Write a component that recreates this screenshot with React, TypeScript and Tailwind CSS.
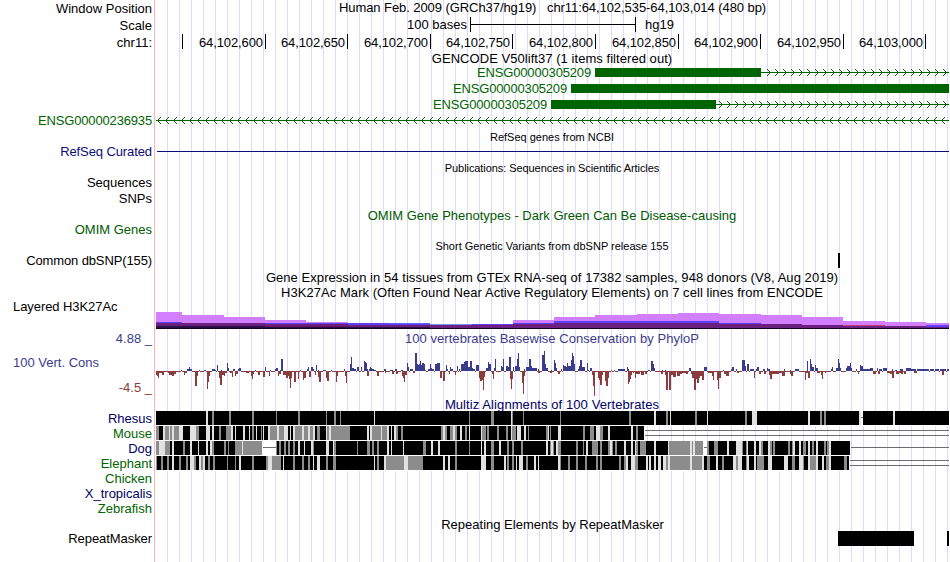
import React from 'react';
import clsx from 'clsx';

// Track drawings share the image's x axis, which starts at the end of the label column
const LEFT = 155;
const WIDTH = 794;
const RIGHT = LEFT + WIDTH;

interface RowProps {
  height: string;
  label?: string;
  labelClass?: string;
  children?: React.ReactNode;
}

function Row({ height, label, labelClass, children }: RowProps) {
  return (
    <div className={clsx('flex', height)}>
      <div className={clsx('w-[155px] shrink-0 pr-[3px] flex items-center justify-end', labelClass)}>
        {label}
      </div>
      <div className="w-[794px] shrink-0">{children}</div>
    </div>
  );
}

interface TitleProps {
  children: React.ReactNode;
  className?: string;
}

function Title({ children, className }: TitleProps) {
  return <div className={clsx('h-full flex items-center justify-center', className)}>{children}</div>;
}

interface CanvasProps {
  top: number;
  height: number;
  children: React.ReactNode;
}

function Canvas({ top, height, children }: CanvasProps) {
  return (
    <svg
      className="block"
      width={WIDTH}
      height={height}
      viewBox={`${LEFT} ${top} ${WIDTH} ${height}`}
      shapeRendering="crispEdges"
    >
      {children}
    </svg>
  );
}

function parse(data: string): number[][] {
  return data
    .trim()
    .split(/[,\n]+/)
    .map(item => item.trim().split(' ').map(Number));
}

/* ---------- Genes ---------- */

const ticks = [
  { label: '64,102,600', width: 'w-[83px]' },
  { label: '64,102,650', width: 'w-[82px]' },
  { label: '64,102,700', width: 'w-[83px]' },
  { label: '64,102,750', width: 'w-[82px]' },
  { label: '64,102,800', width: 'w-[83px]' },
  { label: '64,102,850', width: 'w-[83px]' },
  { label: '64,102,900', width: 'w-[82px]' },
  { label: '64,102,950', width: 'w-[83px]' },
  { label: '64,103,000', width: 'w-[82px]' },
];

interface IntronProps {
  from: number;
  first: number;
  direction: 1 | -1;
}

function Intron({ from, first, direction }: IntronProps) {
  let d = `M${from} 7h${RIGHT - from}v1H${from}z`;
  for (let x = first; x < RIGHT; x += 8) {
    for (let i = 1; i <= 3; i++) {
      const px = x - direction * i;
      d += `M${px} ${7 - i}h1v1h-1zM${px} ${7 + i}h1v1h-1z`;
    }
  }
  return <path d={d} fill="#006400" />;
}

interface GeneProps {
  spacer: string;
  exon: string;
  intron?: IntronProps;
}

function Gene({ spacer, exon, intron }: GeneProps) {
  return (
    <Row height="h-4">
      <div className="h-full flex items-center text-[#006400]">
        <div className={clsx('shrink-0 pr-1 pb-[2px] text-right tracking-[-0.16px]', spacer)}>
          ENSG00000305209
        </div>
        <div className={clsx('h-[9px] shrink-0 bg-[#006400] -mt-px', exon)} />
        {intron && (
          <svg
            className="block flex-1 h-4"
            viewBox={`${intron.from} 0 ${RIGHT - intron.from} 16`}
            shapeRendering="crispEdges"
          >
            <Intron {...intron} />
          </svg>
        )}
      </div>
    </Row>
  );
}

/* ---------- H3K27Ac ---------- */

// x, violet top, blue top, purple top, dark top
const histone = parse(`
156 312 322 323 326, 182 315 323 323 326, 224 317 323 323 326, 265 320 323 324 327,
306 322 323 324 327, 348 323 323 325 327, 389 323 323 325 327, 430 324 324 325 328,
472 324 324 325 328, 513 320 323 324 328, 554 317 321 323 328, 595 315 321 323 328,
637 314 321 323 328, 678 313 321 323 328, 719 314 323 324 328, 761 315 324 324 328,
802 317 325 325 328, 843 321 325 325 328, 885 322 326 326 328, 926 323 325 327 328
`);

function HistoneTrack() {
  return (
    <Canvas top={300} height={30}>
      {histone.map(([x, violet, blue, purple, dark], i) => {
        const w = (histone[i + 1]?.[0] ?? RIGHT) - x;
        return (
          <g key={x}>
            <rect x={x} y={violet} width={w} height={329 - violet} fill="#d17fff" />
            <rect x={x} y={blue} width={w} height={329 - blue} fill="#5f3fff" />
            <rect x={x} y={purple} width={w} height={329 - purple} fill="#6b1f7f" />
            <rect x={x} y={dark} width={w} height={329 - dark} fill="#2a0f4a" />
          </g>
        );
      })}
      <rect x={389} y={323} width={41} height={1} fill="#5f5fff" />
      <rect x={430} y={324} width={42} height={1} fill="#7f8fff" />
      <rect x={843} y={325} width={42} height={1} fill="#bf3f7f" />
      <rect x={265} y={326} width={83} height={1} fill="#6b0f5f" />
      <rect x={156} y={328} width={793} height={1} fill="#140020" />
    </Canvas>
  );
}

/* ---------- PhyloP: x, width, height ---------- */

const conserved = parse(`
181 1 1, 187 2 2, 189 1 4, 190 2 2, 199 1 1, 204 2 1, 212 3 2, 215 1 1, 217 1 6, 221 1 1,
227 1 8, 228 1 3, 233 2 2, 238 2 2, 239 2 3, 255 1 1, 265 1 4, 270 1 1, 275 1 2, 276 2 3,
280 1 1, 281 2 12, 300 1 1, 307 1 2, 308 1 4, 311 2 4, 313 1 2, 316 1 6, 318 1 1, 323 3 1,
331 1 1, 344 1 2, 350 1 7, 351 1 14, 352 2 3, 354 2 2, 357 2 4, 361 1 4, 364 1 10, 365 1 9,
366 1 8, 367 1 2, 369 1 2, 370 1 4, 371 1 3, 372 2 2, 374 2 1, 384 2 2, 390 3 1, 395 2 2,
401 2 1, 407 1 8, 408 1 4, 410 3 2, 415 2 18, 417 1 7, 418 1 6, 419 1 7, 420 1 10, 421 1 6,
422 2 8, 424 1 7, 425 1 1, 428 2 2, 430 1 7, 431 1 3, 432 2 2, 435 2 7, 437 3 8, 446 1 6,
447 1 2, 450 1 4, 451 2 2, 457 1 5, 459 1 2, 461 3 7, 464 1 9, 465 3 10, 468 2 4, 470 2 10,
472 1 3, 473 2 2, 476 3 6, 486 2 3, 488 1 9, 489 2 7, 494 1 3, 495 1 12, 501 1 5, 502 1 4,
503 1 12, 506 2 5, 508 1 4, 509 2 14, 513 1 4, 515 2 5, 517 1 12, 518 1 18, 519 1 4, 524 1 2,
526 2 4, 528 1 4, 529 1 12, 530 1 12, 531 1 5, 532 5 3, 538 1 2, 542 2 16, 544 1 20, 545 1 7,
546 2 3, 551 1 1, 554 1 11, 555 1 8, 556 1 3, 561 1 2, 563 1 6, 564 2 5, 566 1 4, 567 1 8,
568 3 5, 571 1 11, 572 1 18, 573 1 15, 574 1 7, 578 1 2, 579 1 5, 580 2 11, 582 3 4, 587 1 8,
588 1 1, 590 2 3, 611 1 1, 614 1 1, 618 7 2, 627 1 4, 628 1 2, 648 2 1, 651 2 10, 653 1 7,
654 1 3, 662 1 1, 665 1 1, 689 2 3, 704 3 4, 723 1 1, 731 1 2, 732 2 4, 736 1 2, 742 3 11,
745 1 5, 747 2 7, 750 4 2, 756 1 2, 757 2 4, 763 2 2, 767 1 3, 768 2 2, 784 1 2, 790 1 1,
795 4 2, 807 1 10, 810 1 12, 811 1 7, 812 2 4, 815 1 6, 816 2 3, 831 2 2, 832 1 4, 836 2 3,
838 1 12, 839 1 8, 840 1 3, 846 1 3, 847 3 5, 850 1 8, 851 1 3, 856 1 2, 860 1 6, 861 2 5,
863 7 2, 870 3 3, 877 1 3, 879 3 2, 883 4 3, 892 1 2, 895 2 1, 900 3 2, 906 5 3, 911 5 2,
917 12 2, 930 4 2, 935 4 2, 940 6 2, 947 2 2
`);

const accelerated = parse(`
156 1 4, 157 1 5, 158 1 7, 159 3 2, 162 2 4, 168 1 2, 169 3 4, 172 2 5, 174 2 3, 184 1 4,
185 2 2, 195 2 15, 197 1 5, 207 1 18, 208 1 11, 209 1 5, 219 1 7, 220 2 14, 222 2 4, 224 1 5,
225 2 2, 230 2 2, 232 1 6, 235 1 5, 236 2 3, 246 3 2, 251 1 5, 252 1 8, 253 1 3, 258 2 4,
263 2 6, 269 1 5, 278 1 5, 279 2 3, 283 3 4, 286 2 7, 288 1 5, 289 1 8, 290 1 17, 291 1 7,
294 2 11, 298 1 8, 303 1 9, 304 2 7, 309 2 6, 315 1 4, 318 1 6, 319 2 11, 326 1 7, 327 2 10,
336 1 11, 337 1 5, 345 1 5, 346 1 12, 367 2 5, 377 2 5, 385 1 2, 392 2 3, 396 2 3, 402 1 5,
403 1 7, 404 1 11, 405 2 4, 413 2 2, 440 2 7, 443 2 10, 449 1 3, 455 1 4, 479 1 7, 480 2 10,
482 1 9, 483 1 19, 484 1 6, 492 1 3, 493 1 8, 510 1 8, 511 1 18, 512 1 8, 522 1 12, 523 1 23,
524 1 5, 538 2 2, 550 2 2, 558 2 3, 592 1 4, 593 1 15, 594 1 25, 598 1 7, 599 1 9, 600 2 14,
602 1 4, 605 1 10, 606 2 15, 608 1 7, 628 1 13, 629 1 11, 630 1 8, 631 1 4, 633 1 2, 635 1 7,
636 4 3, 641 3 4, 645 2 3, 661 2 3, 665 1 4, 666 2 19, 669 2 19, 671 2 4, 673 3 6, 677 3 5,
680 2 3, 682 4 2, 686 2 3, 691 1 3, 692 2 7, 694 2 19, 696 1 8, 697 2 12, 699 1 7, 700 2 5,
702 2 9, 708 4 2, 712 1 5, 713 1 9, 717 1 9, 718 1 18, 719 2 7, 724 2 3, 726 3 5, 737 2 2,
754 1 7, 759 2 3, 764 2 3, 769 1 4, 770 2 8, 772 2 3, 774 5 3, 779 3 2, 782 3 5, 790 1 3,
791 2 5, 805 1 9, 806 2 2, 808 2 7, 817 3 2, 821 1 4, 822 1 8, 825 1 2, 853 1 1, 858 1 3,
873 3 3, 878 2 3, 887 3 2, 890 2 3, 892 2 7, 896 3 3, 899 2 2, 901 2 3, 904 2 3, 914 3 2,
942 2 4
`);

function bars(data: number[][], up: boolean) {
  return data.map(([x, w, h]) => `M${x} 371h${w}v${up ? -h : h}h-${w}z`).join('');
}

// The baseline only shows between the conserved bars
function baseline() {
  let d = '';
  let x = 156;
  conserved.forEach(([start, w]) => {
    if (start > x) d += `M${x} 371H${start}v1H${x}z`;
    x = Math.max(x, start + w);
  });
  return d;
}

function PhyloPTrack() {
  return (
    <Canvas top={346} height={51}>
      <path d={baseline()} fill="#8c3c3c" />
      <path d={bars(accelerated, false)} fill="#8c3c3c" />
      <path d={bars(conserved, true)} fill="#3c3c8c" />
      <rect x={594} y={394} width={1} height={2} fill="#ff00ff" />
    </Canvas>
  );
}

/* ---------- Multiz: x, width, shade (0 white, 1 light, 2 gray) ---------- */

const shades = ['#ffffff', '#e1e1e1', '#8c8c8c'];

interface Species {
  name: string;
  top: number;
  end: number;
  color: string;
  cells: number[][];
  gaps: number[][];
}

const species: Species[] = [
  {
    name: 'Rhesus',
    top: 411,
    end: 949,
    color: 'text-[#000064]',
    cells: parse(`
206 2 1, 212 2 2, 229 2 2, 252 2 2, 276 1 2, 298 2 2, 326 1 2, 334 2 2, 340 1 2, 374 1 1,
469 1 2, 491 3 2, 511 1 1, 512 1 2, 523 1 2, 560 1 2, 629 2 2, 654 2 1, 666 2 2, 670 1 1,
695 2 2, 707 1 1, 745 2 2, 752 5 1, 808 2 1, 820 2 2, 824 2 2, 859 2 1, 861 2 0, 893 2 1
`),
    gaps: [[861, 417, 2]],
  },
  {
    name: 'Mouse',
    top: 426,
    end: 644,
    color: 'text-[#006400]',
    cells: parse(`
156 3 2, 163 2 1, 165 4 2, 169 1 1, 170 2 2, 172 2 1, 174 5 2, 179 4 1, 190 6 1, 196 3 2,
206 4 1, 212 2 1, 219 2 2, 226 5 2, 231 2 1, 235 1 1, 243 2 1, 249 1 1, 252 2 2, 256 1 1,
261 1 2, 263 1 1, 268 2 1, 270 7 2, 277 2 1, 279 5 2, 284 4 1, 290 1 1, 293 2 1, 295 7 2,
302 2 1, 304 4 2, 308 2 1, 310 3 2, 313 2 1, 317 3 2, 326 1 1, 327 2 2, 329 2 1, 331 19 2,
367 2 1, 370 2 1, 372 9 2, 381 1 1, 382 5 2, 387 2 1, 391 1 1, 394 2 1, 396 2 2, 401 2 2,
441 2 2, 443 2 1, 445 2 2, 450 3 2, 453 2 1, 455 2 2, 460 2 1, 465 2 2, 469 1 1, 481 1 1,
482 4 2, 487 2 2, 497 2 2, 506 2 2, 511 1 1, 512 4 2, 517 4 1, 524 2 1, 528 1 2, 546 2 2,
548 1 1, 550 1 2, 558 3 1, 583 2 2, 590 4 2, 596 4 1, 600 3 2, 608 2 1, 631 2 1, 636 2 2
`),
    gaps: [[645, 430, 304], [645, 435, 304]],
  },
  {
    name: 'Dog',
    top: 441,
    end: 850,
    color: 'text-[#000064]',
    cells: parse(`
156 3 2, 159 6 1, 165 5 2, 172 2 1, 183 2 2, 190 2 1, 198 1 1, 206 2 1, 210 2 1, 212 2 2,
224 2 2, 228 1 2, 235 7 2, 242 1 1, 243 19 2, 262 14 0, 276 1 2, 279 2 2, 284 2 2, 288 2 2,
293 2 2, 298 2 1, 304 1 1, 311 2 1, 313 1 2, 326 3 1, 333 1 1, 334 2 2, 357 1 2, 367 3 2,
372 2 2, 377 2 2, 387 2 1, 391 1 1, 403 1 1, 423 3 2, 431 2 1, 438 2 1, 455 2 2, 469 1 2,
481 1 1, 484 2 1, 491 3 2, 499 2 1, 507 2 2, 512 2 2, 521 2 2, 546 2 1, 550 1 2, 551 2 1,
553 1 2, 556 2 1, 558 3 2, 576 2 2, 583 1 2, 586 2 1, 592 6 2, 600 2 2, 608 2 2, 610 2 1,
612 1 2, 615 2 2, 624 2 1, 631 2 1, 635 1 1, 636 2 2, 640 6 2, 654 2 1, 668 1 1, 669 2 2,
671 19 2, 690 2 1, 692 1 2, 693 2 1, 695 8 2, 703 4 0, 707 2 2, 714 4 2, 727 2 1, 736 2 1,
738 4 1, 742 1 2, 746 1 2, 747 1 1, 754 2 1, 759 2 1, 761 2 2, 768 2 1, 770 2 2, 773 2 2,
788 2 2, 792 1 2, 793 2 1, 799 2 1, 803 3 2, 808 2 1, 812 2 2, 816 2 1, 824 2 2, 827 2 2,
829 2 1
`),
    gaps: [[263, 447, 13], [704, 447, 3], [851, 447, 98]],
  },
  {
    name: 'Elephant',
    top: 456,
    end: 849,
    color: 'text-[#006400]',
    cells: parse(`
156 1 2, 161 2 2, 167 2 2, 172 2 1, 179 2 2, 186 2 2, 190 4 1, 194 2 2, 199 2 1, 201 2 2,
203 2 1, 208 2 2, 213 2 2, 227 1 2, 235 1 2, 239 2 1, 252 2 2, 266 2 2, 268 4 1, 272 9 2,
283 1 1, 293 2 2, 302 2 2, 308 2 2, 313 1 1, 317 3 1, 326 2 2, 333 3 2, 374 1 1, 377 2 2,
384 2 1, 386 18 2, 404 4 1, 408 15 2, 443 2 1, 448 2 1, 455 2 2, 481 5 1, 491 3 2, 504 2 1,
507 2 2, 512 2 2, 516 1 1, 519 4 1, 526 2 2, 534 2 1, 538 1 1, 558 2 1, 560 1 2, 568 2 2,
576 2 2, 585 2 2, 596 2 2, 600 2 2, 619 2 2, 624 2 2, 626 2 1, 631 4 1, 635 3 2, 646 2 1,
649 2 1, 654 2 1, 658 3 1, 663 3 1, 666 2 2, 668 2 1, 670 20 2, 690 2 1, 692 10 2, 702 2 1,
707 3 2, 716 2 1, 722 2 2, 733 3 1, 736 2 2, 738 4 1, 746 1 2, 747 2 1, 754 2 1, 757 7 2,
768 4 1, 784 4 1, 792 3 2, 799 4 1, 803 1 2, 808 2 1, 810 6 2, 816 2 1, 822 2 1, 826 3 2,
829 2 1, 844 3 2
`),
    gaps: [[850, 460, 99], [850, 465, 99]],
  },
];

function AlignmentRow({ name, top, end, color, cells, gaps }: Species) {
  return (
    <Row height="h-[15px]" label={name} labelClass={color}>
      <Canvas top={top} height={15}>
        <rect x={156} y={top} width={end - 156} height={14} fill="#000" />
        <rect x={156} y={top + 14} width={end - 156} height={1} fill="#fff" />
        {cells.map(([x, w, shade]) => (
          <rect key={x} x={x} y={top} width={w} height={14} fill={shades[shade]} />
        ))}
        {gaps.map(([x, y, w]) => (
          <rect key={`${x}-${y}`} x={x} y={y} width={w} height={1} fill="#6e6a72" />
        ))}
      </Canvas>
    </Row>
  );
}

export default function App() {
  return (
    <div className="relative w-[950px] h-[562px] overflow-hidden bg-white font-['Liberation_Sans',Arial,sans-serif] text-[13px] leading-none whitespace-pre text-black">
      {/* Guidelines */}
      <div className="absolute left-[154px] top-0 w-px h-full bg-[#ffb4b4]" />
      <div className="absolute left-[156px] top-0 w-[793px] h-full bg-[repeating-linear-gradient(to_right,transparent_0_11px,#dcdcff_11px_12px)]" />

      <div className="relative flex flex-col">
        <Row height="h-4" label="Window Position">
          <Title className="pb-[2px] pl-px tracking-[-0.07px]">
            {'Human Feb. 2009 (GRCh37/hg19)   chr11:64,102,535-64,103,014 (480 bp)'}
          </Title>
        </Row>
        <Row height="h-[17px]" label="Scale" labelClass="pt-[2px]">
          <div className="h-full flex items-center">
            <div className="w-[315px] pr-[3px] text-right">100 bases</div>
            <div className="w-[166px] h-[15px] border-x border-black flex items-center">
              <div className="w-full h-px bg-black" />
            </div>
            <div className="pl-[9px]">hg19</div>
          </div>
        </Row>
        <Row height="h-[17px]" label="chr11:" labelClass="pt-[2px]">
          <div className="pt-px flex">
            <div className="w-7 h-[15px] border-r border-black" />
            {ticks.map(tick => (
              <div
                key={tick.label}
                className={clsx(
                  'h-[15px] pr-[2px] pt-[2px] border-r border-black flex items-center justify-end tracking-[-0.1px]',
                  tick.width
                )}
              >
                {tick.label}
              </div>
            ))}
          </div>
        </Row>

        {/* GENCODE */}
        <Row height="h-[15px]">
          <Title className="pt-[2px] tracking-[0.05px]">GENCODE V50lift37 (1 items filtered out)</Title>
        </Row>
        <Gene spacer="w-[440px]" exon="w-[166px]" intron={{ from: 761, first: 770, direction: 1 }} />
        <Gene spacer="w-[416px]" exon="w-[378px]" />
        <Gene spacer="w-[396px]" exon="w-[165px]" intron={{ from: 716, first: 722, direction: 1 }} />
        <Row height="h-4" label="ENSG00000236935" labelClass="pb-[2px] text-[#006400] tracking-[-0.16px]">
          <Canvas top={0} height={16}>
            <Intron from={156} first={157} direction={-1} />
          </Canvas>
        </Row>

        {/* RefSeq */}
        <Row height="h-4">
          <Title className="text-[11px]">RefSeq genes from NCBI</Title>
        </Row>
        <Row height="h-[15px]" label="RefSeq Curated" labelClass="pb-[2px] text-[#0c0c78] tracking-[-0.1px]">
          <Canvas top={145} height={15}>
            <rect x={157} y={151} width={792} height={1} fill="#0c0c78" />
          </Canvas>
        </Row>

        {/* Publications */}
        <Row height="h-4">
          <Title className="text-[11px] tracking-[-0.07px]">Publications: Sequences in Scientific Articles</Title>
        </Row>
        <Row height="h-[15px]" label="Sequences" labelClass="pb-[2px]" />
        <Row height="h-4" label="SNPs" labelClass="pb-[2px]" />

        {/* OMIM */}
        <Row height="h-4">
          <Title className="text-[#005a00]">OMIM Gene Phenotypes - Dark Green Can Be Disease-causing</Title>
        </Row>
        <Row height="h-[14px]" label="OMIM Genes" labelClass="pb-[2px] text-[#005a00]" />

        {/* dbSNP */}
        <Row height="h-4">
          <Title className="pt-[2px] text-[11px]">Short Genetic Variants from dbSNP release 155</Title>
        </Row>
        <Row height="h-[15px]" label="Common dbSNP(155)" labelClass="tracking-[-0.12px]">
          <Canvas top={253} height={15}>
            <rect x={838} y={253} width={2} height={15} />
          </Canvas>
        </Row>

        <Row height="h-4">
          <Title className="pt-[2px] tracking-[0.055px]">
            Gene Expression in 54 tissues from GTEx RNA-seq of 17382 samples, 948 donors (V8, Aug 2019)
          </Title>
        </Row>
        <Row height="h-4">
          <Title className="tracking-[0.05px]">
            H3K27Ac Mark (Often Found Near Active Regulatory Elements) on 7 cell lines from ENCODE
          </Title>
        </Row>
        <Row
          height="h-[30px]"
          label="Layered H3K27Ac"
          labelClass="justify-start! items-start! pl-[13px] tracking-[-0.07px]"
        >
          <HistoneTrack />
        </Row>

        {/* Conservation */}
        <Row height="h-4" label="4.88 _" labelClass="text-[#3c3c8c]">
          <Title className="text-[#3c3c8c] tracking-[0.04px]">100 vertebrates Basewise Conservation by PhyloP</Title>
        </Row>
        <div className="flex h-[51px]">
          <div className="w-[155px] shrink-0 pl-[13px] pr-[3px] pt-[10px] pb-[3px] flex flex-col justify-between">
            <div className="text-[#3c3c8c]">100 Vert. Cons</div>
            <div className="text-right text-[#8c3c3c]">-4.5 _</div>
          </div>
          <PhyloPTrack />
        </div>
        <Row height="h-[14px]">
          <Title className="text-[#000064] tracking-[0.09px]">Multiz Alignments of 100 Vertebrates</Title>
        </Row>
        {species.map(s => (
          <AlignmentRow key={s.name} {...s} />
        ))}
        <Row height="h-[15px]" label="Chicken" labelClass="text-[#006400]" />
        <Row height="h-[15px]" label="X_tropicalis" labelClass="text-[#000064]" />
        <Row height="h-[15px]" label="Zebrafish" labelClass="text-[#006400]" />

        {/* RepeatMasker */}
        <Row height="h-[15px]">
          <Title className="pt-[2px] pl-px">Repeating Elements by RepeatMasker</Title>
        </Row>
        <Row height="h-[15px]" label="RepeatMasker" labelClass="tracking-[-0.07px]">
          <Canvas top={531} height={15}>
            <rect x={838} y={531} width={76} height={15} />
            <rect x={947} y={531} width={2} height={15} />
          </Canvas>
        </Row>
      </div>
    </div>
  );
}
